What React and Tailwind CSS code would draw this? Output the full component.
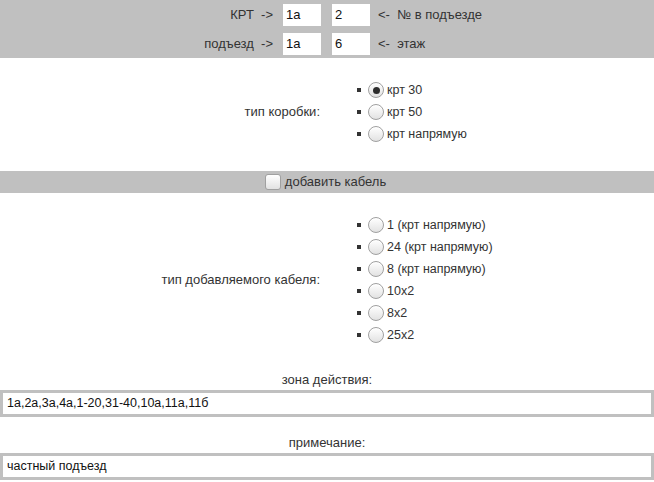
const boxTypes = [
  { label: 'крт 30', checked: true },
  { label: 'крт 50' },
  { label: 'крт напрямую' },
];

const cableTypes = [
  { label: '1 (крт напрямую)' },
  { label: '24 (крт напрямую)' },
  { label: '8 (крт напрямую)' },
  { label: '10x2' },
  { label: '8x2' },
  { label: '25x2' },
];

function Radio({ checked }) {
  return (
    <span className="w-4 h-4 rounded-full border border-[#a0a0a0] bg-gradient-to-b from-white to-[#e2e2e2] flex items-center justify-center shrink-0 shadow-[inset_0_1px_0_#fff]">
      {checked && <span className="w-[7px] h-[7px] rounded-full bg-[#2e2e2e]" />}
    </span>
  );
}

function RadioList({ items }) {
  return (
    <ul className="pl-[30px]">
      {items.map((it) => (
        <li key={it.label} className="h-[22px] flex items-center">
          <span className="w-1 h-1 bg-[#333]" />
          <span className="ml-[7px]"><Radio checked={it.checked} /></span>
          <span className="ml-[3px] text-[12.5px]">{it.label}</span>
        </li>
      ))}
    </ul>
  );
}

function SmallInput({ value }) {
  return (
    <div className="w-[38px] h-[22px] bg-white flex items-center pl-[3px] text-[#111]">{value}</div>
  );
}

function WideInput({ value }) {
  return (
    <div className="bg-[#c0c0c0] p-[3px]">
      <div className="h-[21px] bg-white flex items-center pl-[4px] text-[12.5px] text-[#111]">{value}</div>
    </div>
  );
}

export default function App() {
  return (
    <div className="w-[654px] h-[482px] bg-white text-[13px] text-[#333] font-['Liberation_Sans',Arial,sans-serif] overflow-hidden">
      {/* top selectors */}
      <div className="bg-[#c0c0c0] grid grid-cols-[283px_49px_46px_1fr]">
        <div className="h-[29px] flex items-center justify-end pr-[10px]">КРТ&nbsp;&nbsp;-&gt;</div>
        <div className="h-[29px] flex items-center"><SmallInput value="1a" /></div>
        <div className="h-[29px] flex items-center"><SmallInput value="2" /></div>
        <div className="h-[29px] flex items-center">&lt;-&nbsp;&nbsp;№ в подъезде</div>
        <div className="h-[29px] flex items-center justify-end pr-[10px]">подъезд&nbsp;&nbsp;-&gt;</div>
        <div className="h-[29px] flex items-center"><SmallInput value="1a" /></div>
        <div className="h-[29px] flex items-center"><SmallInput value="6" /></div>
        <div className="h-[29px] flex items-center">&lt;-&nbsp;&nbsp;этаж</div>
      </div>

      {/* box type */}
      <div className="grid grid-cols-2 items-center pt-[21px] pb-[26px]">
        <div className="text-right pr-[7px]">тип коробки:</div>
        <RadioList items={boxTypes} />
      </div>

      {/* add cable */}
      <div className="bg-[#c0c0c0] h-[22px] flex items-center justify-center gap-[4px] pr-[3px]">
        <span className="w-4 h-4 rounded-[3px] border border-[#a0a0a0] bg-gradient-to-b from-white to-[#e2e2e2]" />
        <span>добавить кабель</span>
      </div>

      {/* cable type */}
      <div className="grid grid-cols-2 items-center pt-[21px] pb-[23px]">
        <div className="text-right pr-[7px]">тип добавляемого кабеля:</div>
        <RadioList items={cableTypes} />
      </div>

      <div className="h-[21px] flex items-center justify-center">зона действия:</div>
      <WideInput value="1a,2a,3a,4a,1-20,31-40,10a,11a,11б" />

      <div className="h-[21px] mt-[15px] flex items-center justify-center">примечание:</div>
      <WideInput value="частный подъезд" />
    </div>
  );
}
